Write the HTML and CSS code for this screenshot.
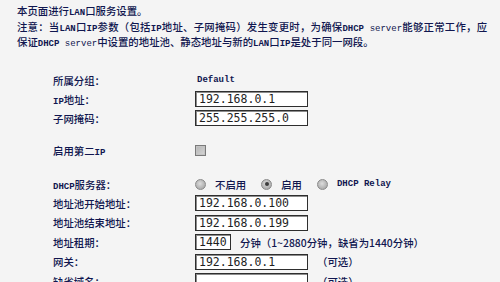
FILE: index.html
```html
<!DOCTYPE html>
<html>
<head>
<meta charset="utf-8">
<link rel="stylesheet" href="styles.css">
</head>
<body>
<div class="page">
  <p class="line">本页面进行<span class="en">LAN</span>口服务设置。</p>
  <p class="line just">注意：当<span class="en">LAN</span>口<span class="en">IP</span>参数（包括<span class="en">IP</span>地址、子网掩码）发生变更时，为确保<span class="en">DHCP</span><span class="en lt"> server</span>能够正常工作，应</p>
  <p class="line">保证<span class="en">DHCP</span><span class="en lt"> server</span>中设置的地址池、静态地址与新的<span class="en">LAN</span>口<span class="en">IP</span>是处于同一网段。</p>

  <div class="form">
    <div class="row"><span class="label">所属分组：</span><span class="en val">Default</span></div>
    <div class="row"><span class="label"><span class="en">IP</span>地址：</span><span class="box">192.168.0.1</span></div>
    <div class="row"><span class="label">子网掩码：</span><span class="box">255.255.255.0</span></div>
    <div class="row sec2"><span class="label">启用第二<span class="en">IP</span></span><span class="check"></span></div>
    <div class="row sec3"><span class="label"><span class="en">DHCP</span>服务器：</span>
      <span class="radios">
        <span class="radio"></span><span class="opt">不启用</span>
        <span class="radio on"></span><span class="opt">启用</span>
        <span class="radio"></span><span class="opt en">DHCP Relay</span>
      </span>
    </div>
    <div class="row wide"><span class="label">地址池开始地址：</span><span class="box">192.168.0.100</span></div>
    <div class="row wide"><span class="label">地址池结束地址：</span><span class="box">192.168.0.199</span></div>
    <div class="row wide"><span class="label">地址租期：</span><span class="box short">1440</span><span class="after">分钟（1~2880分钟，缺省为1440分钟）</span></div>
    <div class="row wide"><span class="label">网关：</span><span class="box">192.168.0.1</span><span class="after">（可选）</span></div>
    <div class="row wide"><span class="label">缺省域名：</span><span class="box"></span><span class="after">（可选）</span></div>
  </div>
</div>
</body>
</html>
```
FILE: styles.css
```css
html, body {
  margin: 0;
  padding: 0;
  background: #f4f4f4;
}
body {
  width: 500px;
  height: 282px;
  overflow: hidden;
  font-family: "Noto Sans CJK SC", sans-serif;
  font-size: 10.4px;
  font-weight: 500;
  color: #10164f;
}
.page {
  padding-top: 3px;
}
.line {
  margin: 0;
  padding-left: 17px;
  height: 15.5px;
  line-height: 15.5px;
  white-space: nowrap;
}
.just {
  width: 470px;
  white-space: normal;
  text-align: justify;
  text-align-last: justify;
}
.en {
  font-family: "Liberation Mono", monospace;
  font-size: 9px;
  font-weight: bold;
  line-height: 1;
}
.en.lt {
  font-weight: normal;
}
.form {
  margin-top: 22.5px;
  margin-left: 53px;
  display: flex;
  flex-direction: column;
}
.row {
  display: flex;
  align-items: center;
  height: 16px;
  margin-bottom: 3px;
}
.row.sec2 { margin-top: 13px; }
.row.sec3 { margin-top: 15px; }
.row.wide { margin-bottom: 3.5px; }
.label {
  width: 142px;
  flex: none;
  white-space: nowrap;
}
.val {
  padding-left: 2px;
}
.box {
  box-sizing: border-box;
  width: 113px;
  height: 16px;
  border: 1px solid #2e2e2e;
  box-shadow: inset 1px 1px 0 #8c8c8c;
  background: #fff;
  font-family: "DejaVu Sans Mono", monospace;
  font-size: 11.5px;
  font-weight: normal;
  line-height: 14px;
  padding-left: 3px;
  color: #1e1e1e;
  flex: none;
}
.box.short {
  width: 36px;
}
.after {
  margin-left: 9px;
  white-space: nowrap;
}
.check {
  box-sizing: border-box;
  width: 11px;
  height: 11px;
  border: 1px solid #7a7a7a;
  background: linear-gradient(135deg, #b4b4b4, #d6d6d6);
  box-shadow: inset 0 0 0 1px #c4c4c4;
}
.radios {
  display: flex;
  align-items: center;
}
.radio {
  box-sizing: border-box;
  width: 11px;
  height: 11px;
  border-radius: 50%;
  border: 1px solid #8a8a8a;
  background: radial-gradient(circle at 45% 40%, #dcdcdc 0, #b8b8b8 55%, #9c9c9c 100%);
  position: relative;
  flex: none;
}
.radio.on::after {
  content: "";
  position: absolute;
  left: 2.5px;
  top: 2.5px;
  width: 4px;
  height: 4px;
  border-radius: 50%;
  background: #3c3c3c;
}
.opt {
  margin-left: 9px;
  margin-right: 15px;
  white-space: nowrap;
}
```
